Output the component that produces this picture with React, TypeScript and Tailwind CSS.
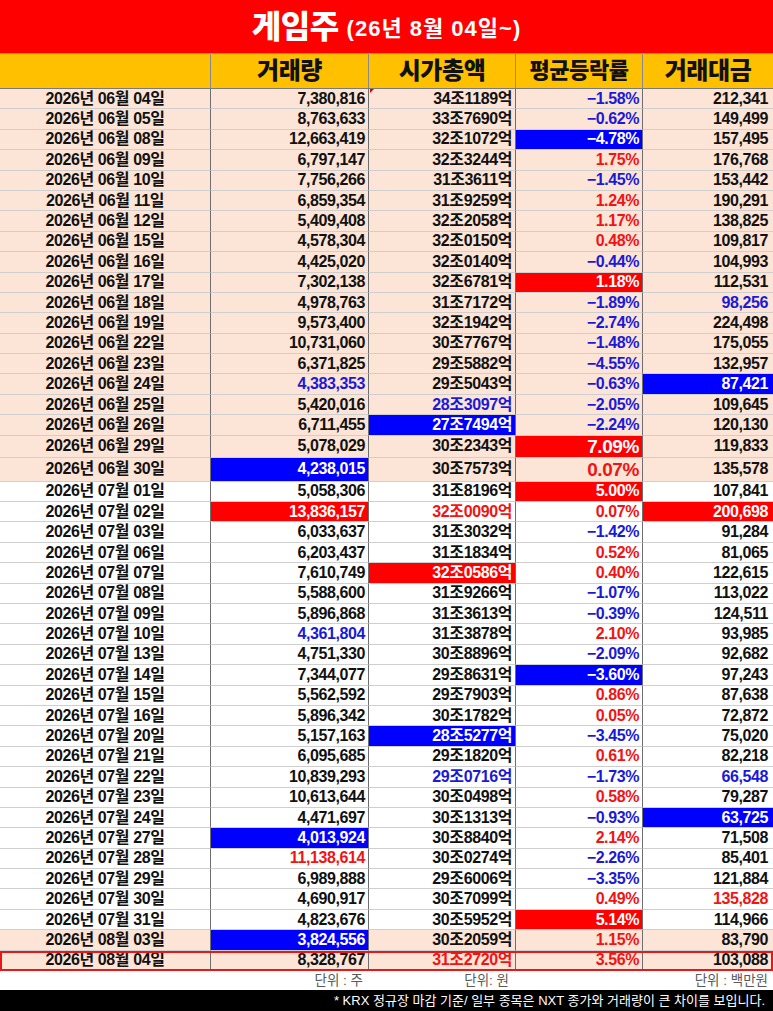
import React from "react";

// value|tone  — b: blue text, r: red text, B: blue fill, R: red fill
type Row = [string, string, string, string, string];

const rows: Row[] = [
  ["06월 04일", "7,380,816", "34조1189억", "−1.58%", "212,341"],
  ["06월 05일", "8,763,633", "33조7690억", "−0.62%", "149,499"],
  ["06월 08일", "12,663,419", "32조1072억", "−4.78%|B", "157,495"],
  ["06월 09일", "6,797,147", "32조3244억", "1.75%", "176,768"],
  ["06월 10일", "7,756,266", "31조3611억", "−1.45%", "153,442"],
  ["06월 11일", "6,859,354", "31조9259억", "1.24%", "190,291"],
  ["06월 12일", "5,409,408", "32조2058억", "1.17%", "138,825"],
  ["06월 15일", "4,578,304", "32조0150억", "0.48%", "109,817"],
  ["06월 16일", "4,425,020", "32조0140억", "−0.44%", "104,993"],
  ["06월 17일", "7,302,138", "32조6781억", "1.18%|R", "112,531"],
  ["06월 18일", "4,978,763", "31조7172억", "−1.89%", "98,256|b"],
  ["06월 19일", "9,573,400", "32조1942억", "−2.74%", "224,498"],
  ["06월 22일", "10,731,060", "30조7767억", "−1.48%", "175,055"],
  ["06월 23일", "6,371,825", "29조5882억", "−4.55%", "132,957"],
  ["06월 24일", "4,383,353|b", "29조5043억", "−0.63%", "87,421|B"],
  ["06월 25일", "5,420,016", "28조3097억|b", "−2.05%", "109,645"],
  ["06월 26일", "6,711,455", "27조7494억|B", "−2.24%", "120,130"],
  ["06월 29일", "5,078,029", "30조2343억", "7.09%|R", "119,833"],
  ["06월 30일", "4,238,015|B", "30조7573억", "0.07%", "135,578"],
  ["07월 01일", "5,058,306", "31조8196억", "5.00%|R", "107,841"],
  ["07월 02일", "13,836,157|R", "32조0090억|r", "0.07%", "200,698|R"],
  ["07월 03일", "6,033,637", "31조3032억", "−1.42%", "91,284"],
  ["07월 06일", "6,203,437", "31조1834억", "0.52%", "81,065"],
  ["07월 07일", "7,610,749", "32조0586억|R", "0.40%", "122,615"],
  ["07월 08일", "5,588,600", "31조9266억", "−1.07%", "113,022"],
  ["07월 09일", "5,896,868", "31조3613억", "−0.39%", "124,511"],
  ["07월 10일", "4,361,804|b", "31조3878억", "2.10%", "93,985"],
  ["07월 13일", "4,751,330", "30조8896억", "−2.09%", "92,682"],
  ["07월 14일", "7,344,077", "29조8631억", "−3.60%|B", "97,243"],
  ["07월 15일", "5,562,592", "29조7903억", "0.86%", "87,638"],
  ["07월 16일", "5,896,342", "30조1782억", "0.05%", "72,872"],
  ["07월 20일", "5,157,163", "28조5277억|B", "−3.45%", "75,020"],
  ["07월 21일", "6,095,685", "29조1820억", "0.61%", "82,218"],
  ["07월 22일", "10,839,293", "29조0716억|b", "−1.73%", "66,548|b"],
  ["07월 23일", "10,613,644", "30조0498억", "0.58%", "79,287"],
  ["07월 24일", "4,471,697", "30조1313억", "−0.93%", "63,725|B"],
  ["07월 27일", "4,013,924|B", "30조8840억", "2.14%", "71,508"],
  ["07월 28일", "11,138,614|r", "30조0274억", "−2.26%", "85,401"],
  ["07월 29일", "6,989,888", "29조6006억", "−3.35%", "121,884"],
  ["07월 30일", "4,690,917", "30조7099억", "0.49%", "135,828|r"],
  ["07월 31일", "4,823,676", "30조5952억", "5.14%|R", "114,966"],
  ["08월 03일", "3,824,556|B", "30조2059억", "1.15%", "83,790"],
  ["08월 04일", "8,328,767", "31조2720억|r", "3.56%", "103,088"],
];

const tones: Record<string, string> = {
  k: "text-[#111]",
  b: "text-[#1a1ad6]",
  r: "text-[#f01414]",
  B: "bg-[#0000ff] text-white",
  R: "bg-[#ff0000] text-white",
};

const cols = "grid grid-cols-[211px_158px_147px_127px_130px]";
const font = { fontFamily: '"Liberation Sans", "Noto Sans CJK KR", sans-serif' };

function Cell({ raw, pct, big, last }: { raw: string; pct?: boolean; big?: boolean; last?: boolean }) {
  const [value, t] = raw.split("|");
  const tone = t ?? (pct ? (value.startsWith("−") ? "b" : "r") : "k");
  return (
    <div
      className={`flex items-center justify-end border-b border-b-[#cfcfcf] ${
        last ? "pr-[5px]" : "pr-[3px] border-r border-r-[#6e6e6e]"
      } ${big ? "text-[19px]" : ""} ${tones[tone]}`}
    >
      {value}
    </div>
  );
}

export default function App() {
  return (
    <div className="w-[773px] bg-white text-[16px] tracking-[-0.4px] leading-none" style={font}>
      {/* Title */}
      <div className="h-[53px] bg-[#ff0000] flex items-center justify-center text-white">
        <span className="text-[32px] font-black tracking-[-0.5px]">게임주</span>
        <span className="ml-2 mt-1 text-[22px] font-bold tracking-[1px]">(26년 8월 04일~)</span>
      </div>

      {/* Header */}
      <div className={`${cols} h-[36px] bg-[#ffc000] border-t border-t-[#9a9a9a] border-b border-b-[#7a7a7a] text-[24px] font-black text-[#111]`}>
        <div className="border-r border-r-[#8a8a8a]" />
        <div className="flex items-center justify-center border-r border-r-[#8a8a8a]">거래량</div>
        <div className="flex items-center justify-center border-r border-r-[#8a8a8a]">시가총액</div>
        <div className="flex items-center justify-center border-r border-r-[#8a8a8a] text-[22px]">평균등락률</div>
        <div className="flex items-center justify-center">거래대금</div>
      </div>

      {/* Rows */}
      <div className="relative font-bold">
        <div className="absolute left-[370px] top-0 w-0 h-0 border-t-[4px] border-t-[#e00000] border-r-[4px] border-r-transparent" />
        {rows.map((r, i) => {
          const peach = i < 19 || i >= 41;
          const h = i === 17 ? "h-[22px]" : i === 18 ? "h-[24px]" : "h-[20.4px]";
          const big = i === 17 || i === 18;
          const lastRow = i === rows.length - 1;
          return (
            <div
              key={r[0]}
              className={`${cols} ${h} ${peach ? "bg-[#fce4d6]" : "bg-white"} ${
                lastRow ? "outline-2 -outline-offset-2 outline-[#e81818]" : ""
              }`}
            >
              <div className="flex items-center justify-center border-r border-r-[#6e6e6e] border-b border-b-[#cfcfcf] text-[#111]">
                2026년 {r[0]}
              </div>
              <Cell raw={r[1]} />
              <Cell raw={r[2]} />
              <Cell raw={r[3]} pct big={big} />
              <Cell raw={r[4]} last />
            </div>
          );
        })}
      </div>

      {/* Units */}
      <div className={`${cols} h-[19px] text-[13.5px] text-[#595959] tracking-normal`}>
        <div />
        <div className="flex items-center justify-end pr-[6px]">단위 : 주</div>
        <div className="flex items-center justify-end pr-[7px]">단위: 원</div>
        <div />
        <div className="flex items-center justify-end pr-[5px]">단위 : 백만원</div>
      </div>

      {/* Footnote */}
      <div className="h-[21px] bg-black text-white text-[13px] tracking-normal flex items-center justify-end pr-[8px]">
        * KRX 정규장 마감 기준/ 일부 종목은 NXT 종가와 거래량이 큰 차이를 보입니다.
      </div>
    </div>
  );
}
